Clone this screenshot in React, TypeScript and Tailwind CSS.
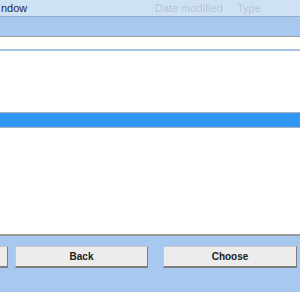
export default function App() {
  return (
    <div
      className="w-[300px] h-[292px] flex flex-col bg-white overflow-hidden"
      style={{ fontFamily: '"Liberation Sans", Arial, sans-serif' }}
    >
      {/* Title strip */}
      <div className="h-[17px] shrink-0 flex items-center bg-[#cfe2f5] border-b border-[#93abc4] text-[11px] relative">
        <span className="text-[#1e2a36] pl-[1px]">ndow</span>
        <span className="absolute left-[155px] text-[#b4c3d2] blur-[0.5px]">Date modified</span>
        <span className="absolute left-[237px] text-[#b4c3d2] blur-[0.5px]">Type</span>
      </div>

      {/* Toolbar band */}
      <div className="h-[20px] shrink-0 bg-[#a8c9ee] border-b border-[#9d9d9d]" />

      {/* Path field */}
      <div className="h-[14px] shrink-0 bg-[#fffefb] border-b-2 border-[#a6c4e4]" />

      {/* List */}
      <div className="flex-1 flex flex-col bg-white">
        <div className="h-[61px]" />
        <div className="h-[16px] bg-[#3196f6] border-y border-[#a9b4c0]" />
        <div className="flex-1" />
      </div>

      {/* Footer */}
      <div className="h-[58px] shrink-0 bg-[#a7c9ef] border-t-2 border-[#9a9a9a] flex items-start pt-[10px]">
        <button className="shrink-0 w-[140px] h-[22px] -ml-[132px] bg-[#ececec] border border-[#c9c9c9] border-r-[#7d7d7d] border-b-[#7d7d7d] border-b-2" />
        <button className="shrink-0 w-[133px] h-[22px] ml-[7px] bg-[#ececec] border border-[#c9c9c9] border-r-[#7d7d7d] border-b-[#7d7d7d] border-b-2 text-[10px] font-bold text-[#222]">
          Back
        </button>
        <button className="shrink-0 w-[134px] h-[22px] ml-[15px] bg-[#ececec] border border-[#c9c9c9] border-r-[#7d7d7d] border-b-[#7d7d7d] border-b-2 text-[10px] font-bold text-[#222]">
          Choose
        </button>
      </div>
    </div>
  );
}
